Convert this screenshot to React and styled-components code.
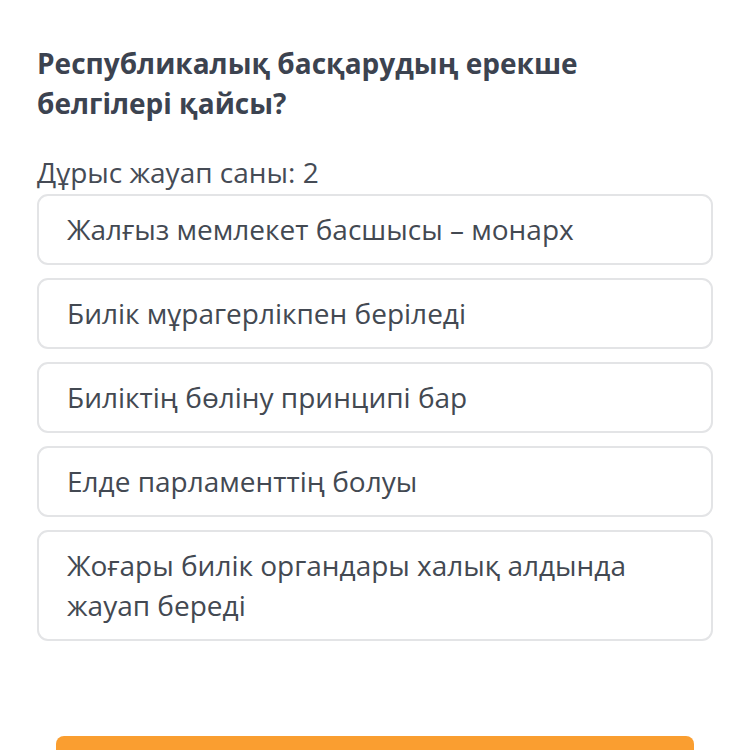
import React from "react";
import styled, { createGlobalStyle } from "styled-components";

const GlobalStyle = createGlobalStyle`
  body {
    margin: 0;
    background: #ffffff;
    font-family: "Open Sans", "Noto Sans", sans-serif;
  }
`;

const Page = styled.main`
  padding: 43px 29px 0 37px;
  height: 750px;
  box-sizing: border-box;
  overflow: hidden;
`;

const Question = styled.h1`
  color: #3c4350;
  font-size: 28px;
  font-weight: 700;
  line-height: 40px;
  margin: 0 0 29px;
  max-width: 600px;
`;

const Hint = styled.p`
  color: #454b55;
  font-size: 28px;
  font-weight: 400;
  line-height: 40px;
  margin: 0 0 2px;
`;

const Options = styled.ul`
  list-style: none;
  margin: 0;
  padding: 0;
  display: flex;
  flex-direction: column;
  gap: 13px;
`;

const Option = styled.li`
  border: 2px solid #e3e4e6;
  border-radius: 11px;
  padding: 13px 28px 14px 28px;
  color: #434952;
  font-size: 28px;
  line-height: 40px;
`;

const Submit = styled.button`
  display: block;
  margin: 95px 19px 0 19px;
  width: calc(100% - 38px);
  height: 60px;
  border: none;
  border-radius: 8px;
  background: #fa9e30;
`;

const answers = [
  "Жалғыз мемлекет басшысы – монарх",
  "Билік мұрагерлікпен беріледі",
  "Биліктің бөліну принципі бар",
  "Елде парламенттің болуы",
  "Жоғары билік органдары халық алдында жауап береді",
];

const App = () => (
  <>
    <GlobalStyle />
    <Page>
      <Question>Республикалық басқарудың ерекше белгілері қайсы?</Question>
      <Hint>Дұрыс жауап саны: 2</Hint>
      <Options>
        {answers.map(a => (
          <Option key={a}>{a}</Option>
        ))}
      </Options>
      <Submit />
    </Page>
  </>
);

export default App;
